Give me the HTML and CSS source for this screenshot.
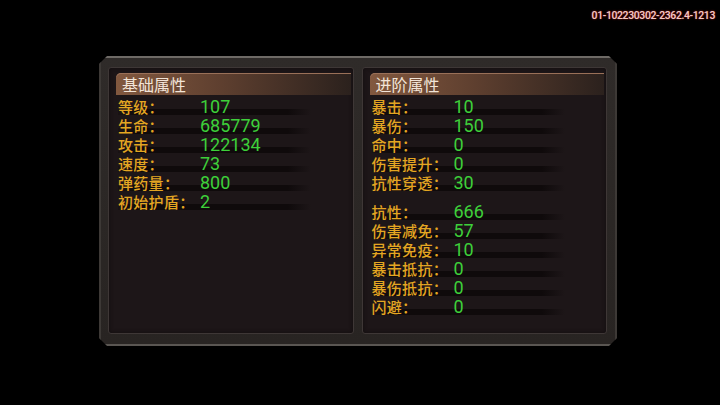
FILE: index.html
```html
<!DOCTYPE html>
<html lang="zh">
<head>
    <meta charset="UTF-8">
    <meta name="viewport" content="width=device-width, initial-scale=1.0">
    <title>属性</title>
    <link rel="stylesheet" href="styles.css">
</head>
<body>
    <div class="topbar"><span class="version">01-102230302-2362.4-1213</span></div>
    <div class="frame">
        <!-- 基础属性 -->
        <div class="panel">
            <div class="panel-title">基础属性</div>
            <div class="rows">
                <div class="row"><span class="label">等级：</span><span class="value">107</span></div>
                <div class="row"><span class="label">生命：</span><span class="value">685779</span></div>
                <div class="row"><span class="label">攻击：</span><span class="value">122134</span></div>
                <div class="row"><span class="label">速度：</span><span class="value">73</span></div>
                <div class="row"><span class="label">弹药量：</span><span class="value">800</span></div>
                <div class="row"><span class="label">初始护盾：</span><span class="value">2</span></div>
            </div>
        </div>

        <!-- 进阶属性 -->
        <div class="panel">
            <div class="panel-title">进阶属性</div>
            <div class="rows">
                <div class="row"><span class="label">暴击：</span><span class="value">10</span></div>
                <div class="row"><span class="label">暴伤：</span><span class="value">150</span></div>
                <div class="row"><span class="label">命中：</span><span class="value">0</span></div>
                <div class="row"><span class="label">伤害提升：</span><span class="value">0</span></div>
                <div class="row"><span class="label">抗性穿透：</span><span class="value">30</span></div>
            </div>
            <div class="rows rows-gap">
                <div class="row"><span class="label">抗性：</span><span class="value">666</span></div>
                <div class="row"><span class="label">伤害减免：</span><span class="value">57</span></div>
                <div class="row"><span class="label">异常免疫：</span><span class="value">10</span></div>
                <div class="row"><span class="label">暴击抵抗：</span><span class="value">0</span></div>
                <div class="row"><span class="label">暴伤抵抗：</span><span class="value">0</span></div>
                <div class="row"><span class="label">闪避：</span><span class="value">0</span></div>
            </div>
        </div>
    </div>
</body>
</html>
```

FILE: styles.css
```css
body {
    margin: 0;
    background: #000;
    font-family: "Noto Sans CJK SC", "Noto Sans", sans-serif;
    width: 720px;
    height: 405px;
    overflow: hidden;
}

.topbar {
    height: 56px;
    text-align: right;
    padding-right: 5px;
    box-sizing: border-box;
}

.version {
    display: inline-block;
    margin-top: 1px;
    font-family: "Roboto", "Liberation Sans", sans-serif;
    font-size: 10.5px;
    font-weight: 500;
    line-height: 11px;
    letter-spacing: -0.4px;
    color: #f0ccc8;
    text-shadow: 0 0 2px #a01818, 0 0 1px #701010;
}

.frame {
    margin-left: 99px;
    width: 518px;
    height: 290px;
    box-sizing: border-box;
    padding: 9px 10px 10px 9px;
    display: flex;
    gap: 8px;
    background: linear-gradient(#2f2b29, #282422);
    border-top: 2px solid #6e6a66;
    border-bottom: 2px solid #5a5652;
    box-shadow: inset 2px 0 0 #3d3936, inset -2px 0 0 #3d3936;
    clip-path: polygon(8px 0, calc(100% - 8px) 0, 100% 8px, 100% calc(100% - 8px), calc(100% - 8px) 100%, 8px 100%, 0 calc(100% - 8px), 0 8px);
}

.panel {
    flex: 1;
    background: #1d1618;
    border: 1px solid #3e3736;
    border-radius: 3px;
    box-shadow: inset 0 0 4px #120d0e;
    padding: 5px 2px 0 7px;
}

.panel-title {
    height: 22px;
    line-height: 22px;
    padding-left: 6px;
    font-size: 16px;
    color: #f2e4d8;
    border-radius: 5px 0 0 0;
    background: linear-gradient(to right, #82583f, #5e3f2f 45%, #2b211d);
    box-shadow: inset 0 1px 0 #9a7058;
}

.rows {
    margin-top: 2px;
    padding-left: 2px;
}

.rows-gap {
    margin-top: 10px;
}

.row {
    display: flex;
    height: 19px;
    line-height: 19px;
    width: 193px;
    background: linear-gradient(to right, rgba(14,9,10,0.3), #0f0a0b 10%, #0f0a0b 88%, rgba(14,9,10,0)) no-repeat;
    background-size: 100% 6px;
    background-position: 0 12px;
}

.label {
    width: 82px;
    flex-shrink: 0;
    font-size: 15px;
    font-weight: 500;
    color: #e4a622;
    white-space: nowrap;
    letter-spacing: 0.3px;
}

.value {
    font-family: "Roboto", "Liberation Sans", sans-serif;
    font-size: 18px;
    color: #3ed03a;
}
```
